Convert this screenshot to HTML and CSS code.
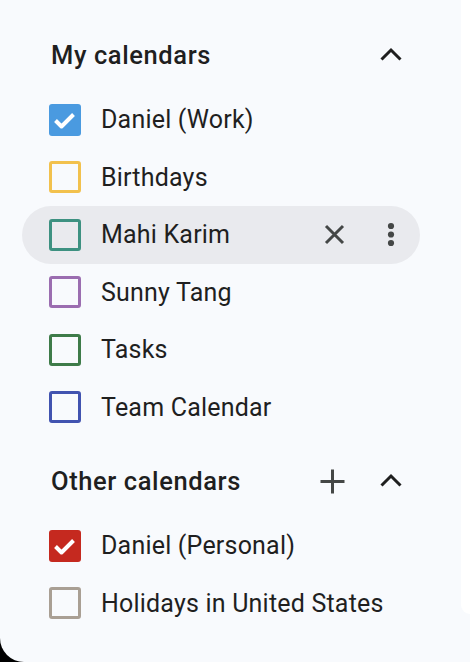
FILE: index.html
```html
<!DOCTYPE html>
<html lang="en">
<head>
<meta charset="utf-8">
<title>Calendars</title>
<link rel="stylesheet" href="styles.css">
</head>
<body>
<div class="window">
  <aside class="sidebar">
    <div class="section-head">
      <span class="section-title">My calendars</span>
      <span class="head-actions">
        <span class="icon-btn" aria-label="Collapse">
          <svg width="24" height="24" viewBox="0 0 24 24"><polyline points="2.5,16.5 12,7 21.5,16.5" fill="none" stroke="#1f1f1f" stroke-width="3"/></svg>
        </span>
      </span>
    </div>
    <ul class="cal-list">
      <li class="cal-row">
        <span class="box checked c-blue"><svg width="32" height="32" viewBox="0 0 32 32"><polyline points="6.5,16.5 12.5,22.5 24.5,10.5" fill="none" stroke="#fff" stroke-width="4" stroke-linejoin="round"/></svg></span>
        <span class="cal-name">Daniel (Work)</span>
      </li>
      <li class="cal-row">
        <span class="box c-yellow"></span>
        <span class="cal-name">Birthdays</span>
      </li>
      <li class="cal-row hover">
        <span class="box c-teal"></span>
        <span class="cal-name">Mahi Karim</span>
        <span class="row-actions">
          <span class="icon-btn" aria-label="Remove">
            <svg width="21" height="21" viewBox="0 0 21 21"><path d="M2 2L19 19M19 2L2 19" fill="none" stroke="#444746" stroke-width="3"/></svg>
          </span>
          <span class="icon-btn" aria-label="More">
            <svg width="8" height="26" viewBox="0 0 8 26"><circle cx="4" cy="4" r="3.1" fill="#444746"/><circle cx="4" cy="12.5" r="3.1" fill="#444746"/><circle cx="4" cy="21" r="3.1" fill="#444746"/></svg>
          </span>
        </span>
      </li>
      <li class="cal-row">
        <span class="box c-purple"></span>
        <span class="cal-name">Sunny Tang</span>
      </li>
      <li class="cal-row">
        <span class="box c-green"></span>
        <span class="cal-name">Tasks</span>
      </li>
      <li class="cal-row">
        <span class="box c-indigo"></span>
        <span class="cal-name">Team Calendar</span>
      </li>
    </ul>

    <div class="section-head other">
      <span class="section-title">Other calendars</span>
      <span class="head-actions">
        <span class="icon-btn" aria-label="Add">
          <svg width="25" height="25" viewBox="0 0 25 25"><path d="M0.5 12.5H24.5M12.5 0.5V24.5" fill="none" stroke="#444746" stroke-width="3"/></svg>
        </span>
        <span class="icon-btn" aria-label="Collapse">
          <svg width="24" height="24" viewBox="0 0 24 24"><polyline points="2.5,16.5 12,7 21.5,16.5" fill="none" stroke="#1f1f1f" stroke-width="3"/></svg>
        </span>
      </span>
    </div>
    <ul class="cal-list">
      <li class="cal-row">
        <span class="box checked c-red"><svg width="32" height="32" viewBox="0 0 32 32"><polyline points="6.5,16.5 12.5,22.5 24.5,10.5" fill="none" stroke="#fff" stroke-width="4" stroke-linejoin="round"/></svg></span>
        <span class="cal-name">Daniel (Personal)</span>
      </li>
      <li class="cal-row">
        <span class="box c-grey"></span>
        <span class="cal-name">Holidays in United States</span>
      </li>
    </ul>
  </aside>
  <main class="main"></main>
</div>
</body>
</html>
```

FILE: styles.css
```css
* { box-sizing: border-box; }

html, body {
  margin: 0;
  padding: 0;
  background: #000;
}

body {
  font-family: Roboto, "Liberation Sans", Arial, sans-serif;
  color: #1f1f1f;
}

.window {
  display: flex;
  width: 470px;
  height: 662px;
  background: #f8fafd;
  border-bottom-left-radius: 24px;
  overflow: hidden;
}

.sidebar {
  flex: none;
  width: 461px;
  padding-top: 26px;
}

.main {
  flex: 1;
  align-self: flex-start;
  height: 614px;
  background: #fff;
  border-bottom-left-radius: 26px;
}

.section-head {
  display: flex;
  align-items: center;
  height: 58px;
  padding-left: 51px;
  padding-right: 50px;
  margin-bottom: 7px;
}

.section-head.other {
  margin-top: 16px;
}

.section-title {
  flex: 1;
  font-size: 25.5px;
  font-weight: 500;
  letter-spacing: 0.6px;
  white-space: nowrap;
}

.head-actions {
  display: flex;
  align-items: center;
  gap: 19px;
}

.icon-btn {
  display: flex;
  align-items: center;
  justify-content: center;
  width: 40px;
  height: 40px;
}

.cal-list {
  list-style: none;
  margin: 0;
  padding: 0;
}

.cal-row {
  display: flex;
  align-items: center;
  width: 398px;
  height: 57.5px;
  margin-left: 22px;
  padding-left: 27px;
  padding-right: 9px;
  border-radius: 29px;
}

.cal-row.hover {
  background: #e9eaee;
}

.box {
  flex: none;
  display: flex;
  width: 32px;
  height: 32px;
  border: 3.3px solid;
  border-radius: 3px;
  margin-right: 20px;
}

.box.checked {
  border: none;
}

.box.checked svg { display: block; }

.cal-name {
  flex: 1;
  font-size: 25px;
  letter-spacing: 0.2px;
  white-space: nowrap;
}

.row-actions {
  display: flex;
  align-items: center;
  gap: 17px;
}

.c-blue { background: #4a9ae0; border-color: #4a9ae0; }
.c-yellow { border-color: #f2c14d; }
.c-teal { border-color: #3d9181; }
.c-purple { border-color: #9b6db0; }
.c-green { border-color: #3e7b49; }
.c-indigo { border-color: #4153b0; }
.c-red { background: #c5291f; border-color: #c5291f; }
.c-grey { border-color: #a99f94; }
```
